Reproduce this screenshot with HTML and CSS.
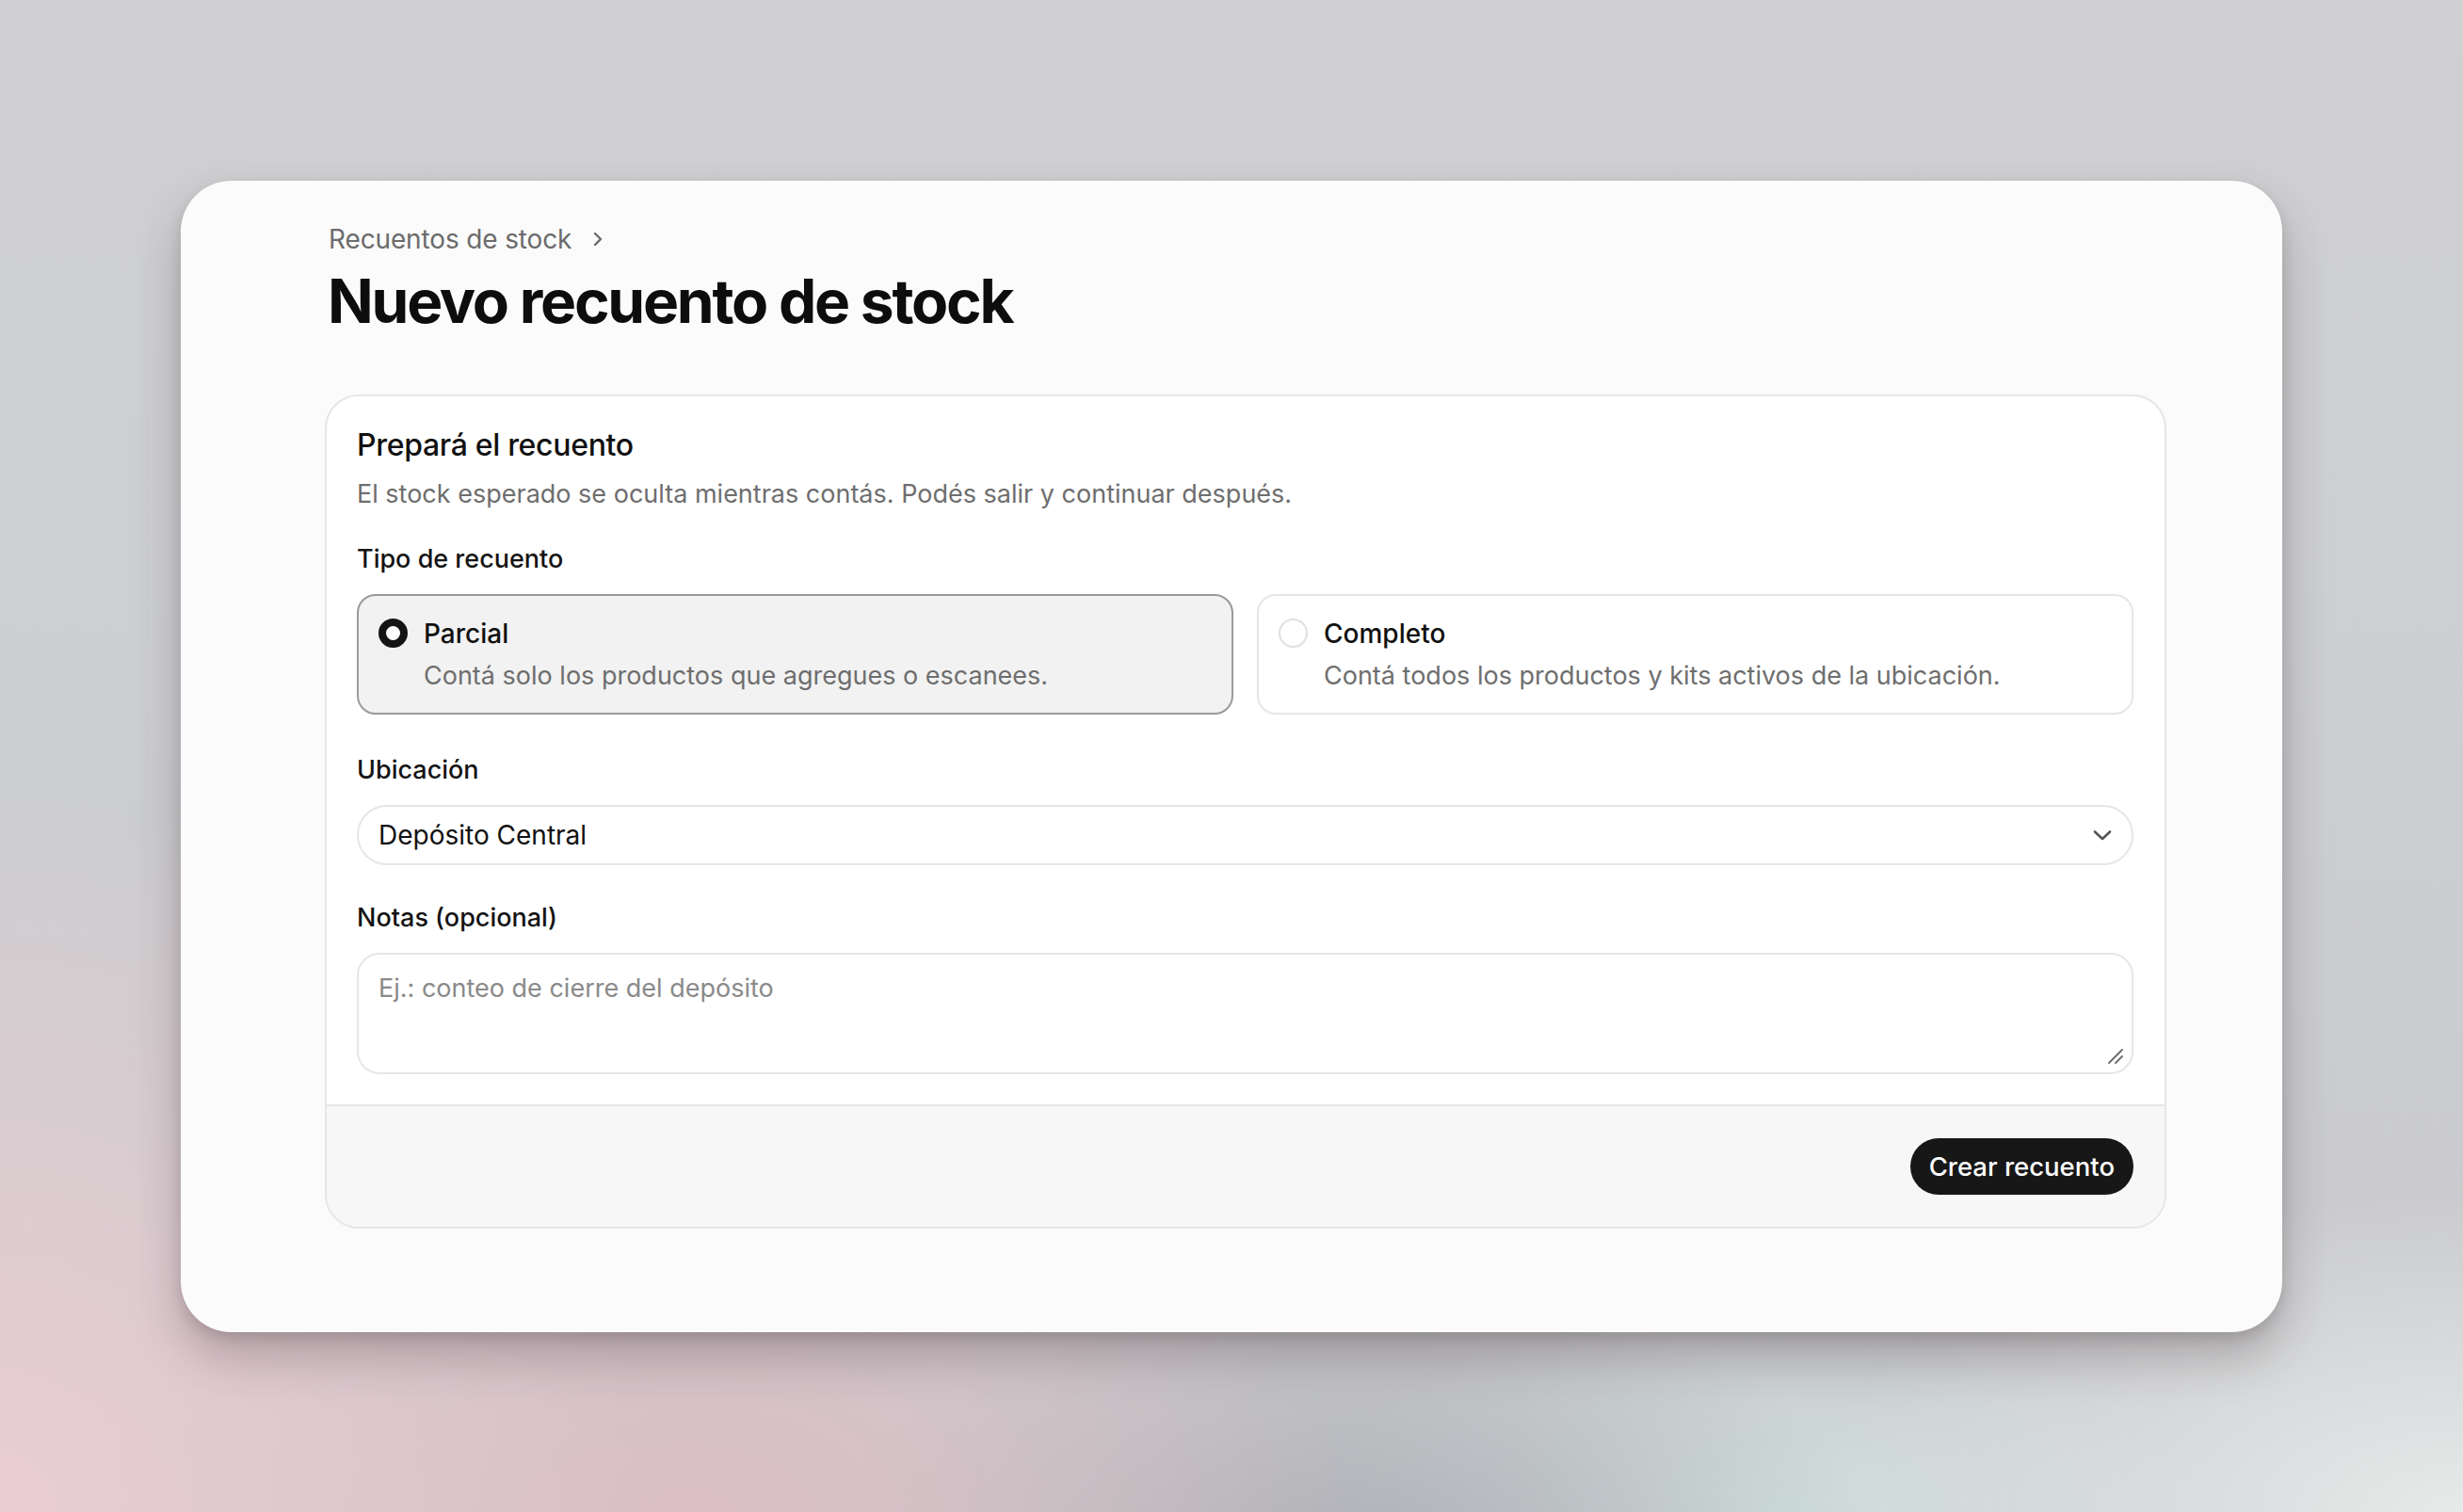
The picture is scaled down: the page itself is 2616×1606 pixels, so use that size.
FILE: index.html
```html
<!DOCTYPE html>
<html lang="es">
<head>
<meta charset="utf-8">
<title>Nuevo recuento de stock</title>
<link rel="stylesheet" href="styles.css">
</head>
<body>
<div class="stage">
  <main class="window">
    <nav class="breadcrumb">
      <span class="crumb">Recuentos de stock</span>
      <svg class="crumb-chev" width="12" height="18" viewBox="0 0 12 18"><path d="M3 3l6 6-6 6" fill="none" stroke="#6b6b6b" stroke-width="2.4" stroke-linecap="round" stroke-linejoin="round"/></svg>
    </nav>
    <h1 class="title">Nuevo recuento de stock</h1>

    <section class="card">
      <div class="card-body">
        <h2 class="card-title">Prepará el recuento</h2>
        <p class="card-desc">El stock esperado se oculta mientras contás. Podés salir y continuar después.</p>

        <div class="field field-type">
          <div class="label">Tipo de recuento</div>
          <div class="options">
            <div class="option selected">
              <span class="radio on"></span>
              <div class="option-text">
                <div class="option-title">Parcial</div>
                <div class="option-desc">Contá solo los productos que agregues o escanees.</div>
              </div>
            </div>
            <div class="option">
              <span class="radio"></span>
              <div class="option-text">
                <div class="option-title">Completo</div>
                <div class="option-desc">Contá todos los productos y kits activos de la ubicación.</div>
              </div>
            </div>
          </div>
        </div>

        <div class="field field-location">
          <div class="label">Ubicación</div>
          <div class="select">
            <span class="select-value">Depósito Central</span>
            <svg class="select-chev" width="22" height="14" viewBox="0 0 22 14"><path d="M3 3.5l8 7.5 8-7.5" fill="none" stroke="#555" stroke-width="2.6" stroke-linecap="round" stroke-linejoin="round"/></svg>
          </div>
        </div>

        <div class="field field-notes">
          <div class="label">Notas (opcional)</div>
          <div class="textarea-wrap">
            <textarea class="textarea" placeholder="Ej.: conteo de cierre del depósito"></textarea>
            <svg class="grip" width="20" height="20" viewBox="0 0 20 20"><path d="M3 17L17 3M10 17l7-7" fill="none" stroke="#6f6f6f" stroke-width="2" stroke-linecap="round"/></svg>
          </div>
        </div>
      </div>
      <footer class="card-footer">
        <button class="btn">Crear recuento</button>
      </footer>
    </section>
  </main>
</div>
</body>
</html>
```

FILE: styles.css
```css
* { box-sizing: border-box; }

html, body {
  margin: 0;
  padding: 0;
  width: 100%;
  height: 100%;
}

body {
  font-family: Inter, "Noto Sans", "Liberation Sans", sans-serif;
  color: #111;
  background:
    radial-gradient(ellipse 1000px 1100px at 0% 100%, rgba(236, 205, 210, 0.95), rgba(236, 205, 210, 0) 70%),
    radial-gradient(ellipse 1000px 560px at 28% 100%, rgba(222, 188, 194, 0.85), rgba(222, 188, 194, 0) 70%),
    radial-gradient(ellipse 800px 420px at 55% 103%, rgba(172, 174, 180, 0.9), rgba(172, 174, 180, 0) 70%),
    radial-gradient(ellipse 1000px 480px at 100% 100%, rgba(230, 234, 233, 1), rgba(230, 234, 233, 0) 70%),
    radial-gradient(ellipse 700px 320px at 72% 100%, rgba(208, 224, 222, 0.95), rgba(208, 224, 222, 0) 70%),
    linear-gradient(180deg, #d0d0d2 0%, #cdcfd2 40%, #c9c9cc 100%);
}

.stage {
  width: 100%;
  height: 100%;
  display: flex;
  align-items: center;
  justify-content: center;
}

.window {
  width: 2232px;
  height: 1223px;
  background: #fbfbfb;
  border-radius: 54px;
  padding: 42px 123px 0 153px;
  box-shadow:
    0 26px 50px rgba(60, 40, 45, 0.28),
    0 6px 14px rgba(0, 0, 0, 0.12);
  display: flex;
  flex-direction: column;
}

.breadcrumb {
  display: flex;
  align-items: center;
  gap: 22px;
  height: 40px;
  padding-left: 4px;
}

.crumb {
  font-size: 28px;
  line-height: 40px;
  color: #6b6b6b;
  letter-spacing: -0.005em;
}

.crumb-chev { display: block; }

.title {
  margin: 7px 0 0 0;
  padding-left: 3px;
  font-size: 64px;
  line-height: 77px;
  font-weight: 700;
  letter-spacing: -0.035em;
  color: #0d0d0d;
}

.card {
  margin-top: 61px;
  width: 1956px;
  background: #fff;
  border: 2px solid #e6e6e6;
  border-radius: 36px;
  overflow: hidden;
}

.card-body {
  padding: 32px 33px 32px 32px;
  display: flex;
  flex-direction: column;
}

.card-title {
  margin: 0;
  font-size: 32px;
  line-height: 40px;
  font-weight: 500;
  letter-spacing: -0.01em;
  color: #111;
}

.card-desc {
  margin: 13px 0 0 0;
  font-size: 27px;
  line-height: 38px;
  color: #6e6e6e;
}

.field {
  display: flex;
  flex-direction: column;
  gap: 18px;
}

.field-type { margin-top: 31px; }
.field-location { margin-top: 40px; }
.field-notes { margin-top: 37px; }

.label {
  font-size: 27px;
  line-height: 38px;
  font-weight: 500;
  color: #141414;
}

.options {
  display: grid;
  grid-template-columns: 1fr 1fr;
  gap: 25px;
}

.option {
  display: flex;
  gap: 17px;
  align-items: flex-start;
  height: 128px;
  padding: 22px 21px;
  border: 2px solid #e6e6e6;
  border-radius: 20px;
  background: #fff;
}

.option.selected {
  background: #f2f2f2;
  border-color: #9a9a9a;
}

.radio {
  flex: none;
  width: 31px;
  height: 31px;
  margin-top: 2px;
  border-radius: 50%;
  border: 2px solid #e0e0e0;
  background: #fff;
}

.radio.on {
  border: 8px solid #141414;
}

.option-text {
  display: flex;
  flex-direction: column;
  gap: 9px;
}

.option-title {
  font-size: 28px;
  line-height: 36px;
  font-weight: 500;
  color: #111;
}

.option-desc {
  font-size: 27px;
  line-height: 36px;
  color: #6e6e6e;
}

.select {
  height: 64px;
  border: 2px solid #e6e6e6;
  border-radius: 32px;
  background: #fff;
  display: flex;
  align-items: center;
  justify-content: space-between;
  padding: 0 20px 0 21px;
}

.select-value {
  font-size: 28px;
  line-height: 36px;
  color: #111;
}

.select-chev { display: block; }

.textarea-wrap {
  position: relative;
  height: 129px;
}

.textarea {
  display: block;
  width: 100%;
  height: 129px;
  resize: none;
  border: 2px solid #e6e6e6;
  border-radius: 24px;
  background: #fff;
  padding: 18px 21px;
  font-family: Inter, "Noto Sans", "Liberation Sans", sans-serif;
  font-size: 27px;
  line-height: 36px;
  color: #111;
  outline: none;
}

.textarea::placeholder { color: #8a8a8a; }

.grip {
  position: absolute;
  right: 9px;
  bottom: 9px;
}

.card-footer {
  height: 130px;
  background: #f7f7f7;
  border-top: 2px solid #e6e6e6;
  display: flex;
  align-items: center;
  justify-content: flex-end;
  padding: 0 33px;
}

.btn {
  height: 60px;
  padding: 0 20px;
  border: none;
  border-radius: 30px;
  background: #171717;
  color: #fff;
  font-family: Inter, "Noto Sans", "Liberation Sans", sans-serif;
  font-size: 27.5px;
  font-weight: 500;
  line-height: 60px;
}
```
